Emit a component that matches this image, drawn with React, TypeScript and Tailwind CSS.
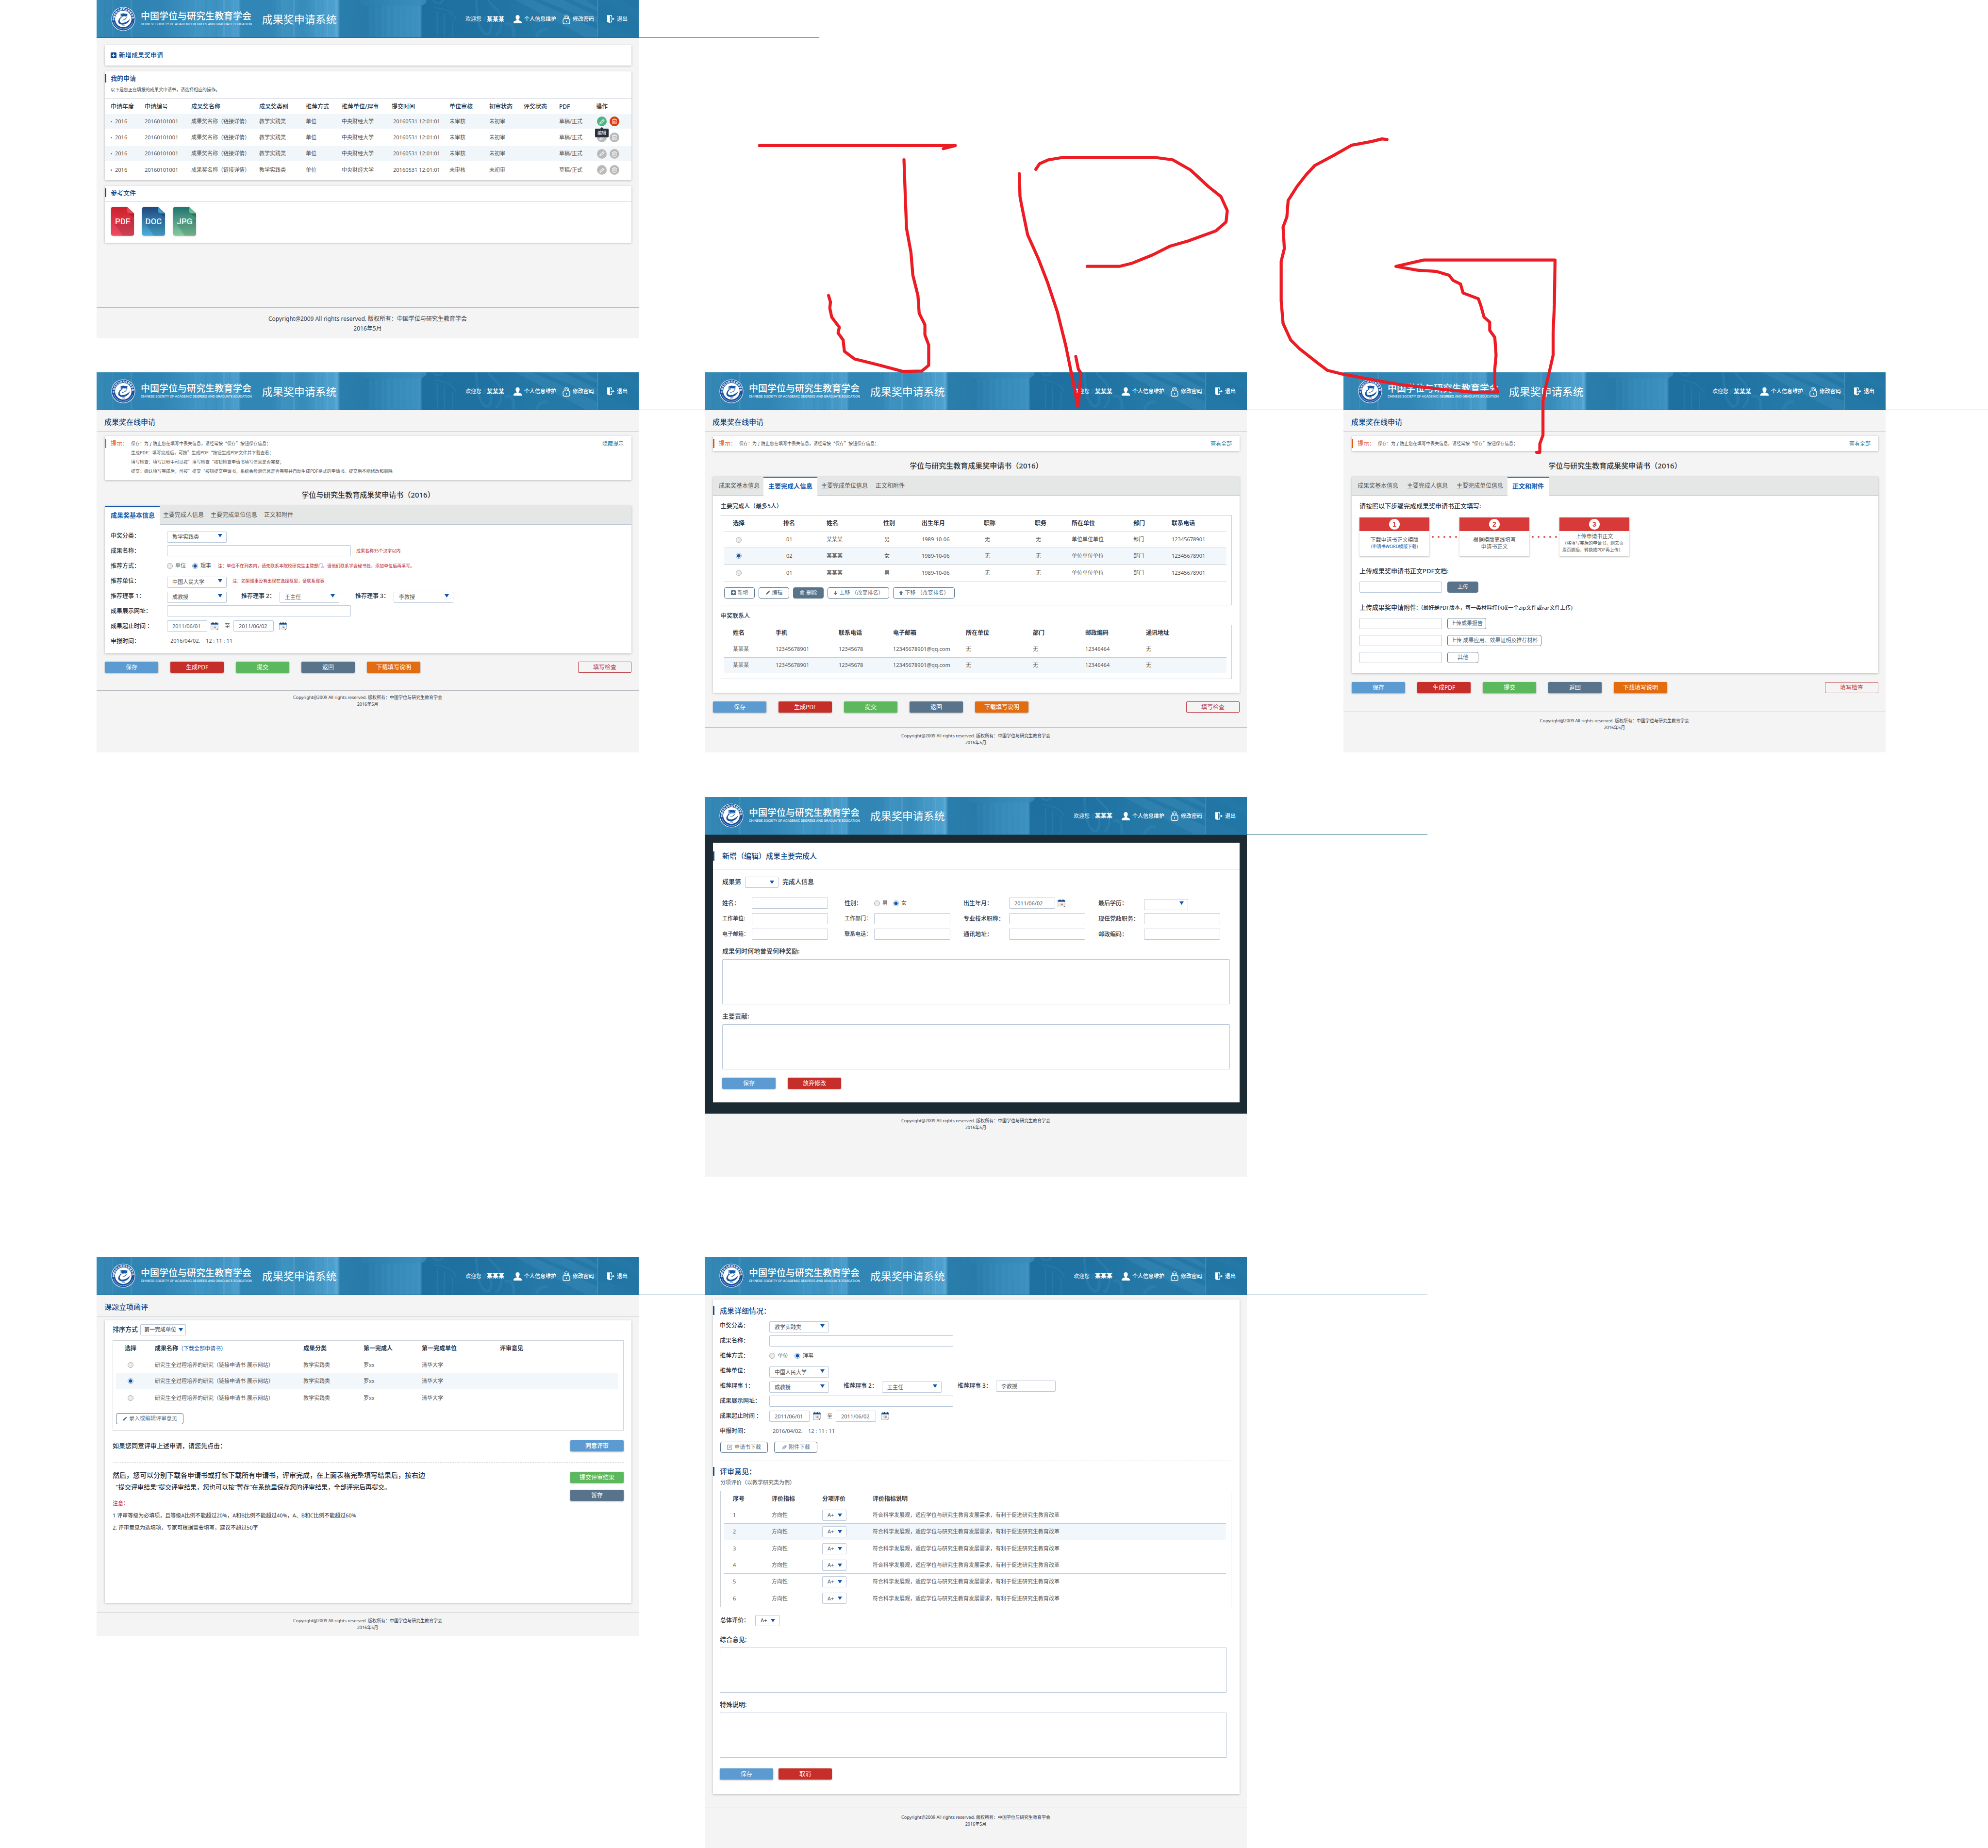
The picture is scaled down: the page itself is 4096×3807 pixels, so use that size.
import React, { useId } from "react";
import { clsx } from "clsx";

/* ---------- artwork ---------- */

function useSafeId() {
  return "u" + useId().replace(/[^a-zA-Z0-9]/g, "");
}

function BannerArt() {
  const id = useSafeId();
  const streaks = [20, 42, 66, 90, 240, 262, 288, 300, 318, 336, 352, 362, 470, 492, 505, 522, 560, 582, 598, 612, 624, 634];
  const flutes = [724, 740, 757, 772, 790, 806, 822, 838, 852];
  return (
    <svg className="absolute inset-0 h-full w-full" viewBox="0 0 1440 100" preserveAspectRatio="none" aria-hidden="true">
      <defs>
        <linearGradient id={id + "a"} x1="0" x2="1" y1="0" y2="0">
          <stop offset="0" stopColor="#3789b6" />
          <stop offset=".05" stopColor="#2f84b3" />
          <stop offset=".12" stopColor="#3085b4" />
          <stop offset=".19" stopColor="#3f95c4" />
          <stop offset=".22" stopColor="#3c91c0" />
          <stop offset=".262" stopColor="#4c9fcd" />
          <stop offset=".266" stopColor="#3086b5" />
          <stop offset=".32" stopColor="#3186b5" />
          <stop offset=".35" stopColor="#3e93c1" />
          <stop offset=".38" stopColor="#368bb9" />
          <stop offset=".42" stopColor="#4a9dcb" />
          <stop offset=".445" stopColor="#4fa2d0" />
          <stop offset=".449" stopColor="#2a7eac" />
          <stop offset=".5" stopColor="#287ba9" />
          <stop offset=".54" stopColor="#3388b7" />
          <stop offset=".597" stopColor="#3c91c0" />
          <stop offset=".601" stopColor="#1d70a0" />
          <stop offset=".7" stopColor="#1e71a1" />
          <stop offset=".82" stopColor="#2579a7" />
          <stop offset="1" stopColor="#2478a7" />
        </linearGradient>
        <linearGradient id={id + "b"} x1="0" x2="1" y1="0" y2="0">
          <stop offset="0" stopColor="#2a7eac" />
          <stop offset="1" stopColor="#3a8fbe" />
        </linearGradient>
      </defs>
      <rect width="1440" height="100" fill={`url(#${id}a)`} />
      {streaks.map((x, i) => (
        <rect key={x} x={x} y="0" width={i % 3 === 0 ? 5 : 2} height="100" fill={i % 2 ? "#ffffff" : "#1c6d9e"} opacity=".08" />
      ))}
      <path d="M700 0h176c2 7-6 12-12 15H708c-6-4-8-9-8-15z" fill={`url(#${id}b)`} opacity=".8" />
      {flutes.map((x) => (
        <rect key={x} x={x} y="17" width="7" height="83" rx="3" fill="#67b3dc" opacity=".08" />
      ))}
      <g fill="none" stroke="#4d9fcb" opacity=".18">
        <path d="M1008 0c4 30 0 70 24 90 12 6 20-12 14-34-4-16-18-14-16 2" strokeWidth="7" />
        <path d="M1040 0c10 18 30 22 34 50 4 24-4 38-14 44" strokeWidth="6" />
        <path d="M1084 66c14-8 26 0 24 34M1168 100c4-16 18-24 30-20" strokeWidth="8" />
        <path d="M896 20c30 4 50 10 60 34M905 30v70M924 36v64M946 52v48" strokeWidth="3" />
        <path d="M894 0c6 10 22 12 26 0" strokeWidth="5" />
      </g>
      <path d="M1112 0h46l172 78v22h-30zM1180 0h60l90 44v18zM1262 0h36l32 20v10z" fill="#5aa9d4" opacity=".18" />
      <rect x="1330" y="0" width="1" height="100" fill="#7fbcdb" opacity=".7" />
      <path d="M1340 0l100 52v48l-110-46zM1390 0l50 24V0z" fill="#1b6c9c" opacity=".2" />
    </svg>
  );
}

function Emblem() {
  const id = useSafeId();
  return (
    <svg className="size-[50px] shrink-0 overflow-visible" viewBox="0 0 66 66" aria-hidden="true">
      <defs>
        <path id={id + "t"} d="M9.400 37.500a24 24 0 1 1 47.200 0" />
      </defs>
      <circle cx="33" cy="33" r="32.500" fill="#e9f3fa" />
      <circle cx="33" cy="33" r="31" fill="#14509d" />
      <circle cx="33" cy="33" r="22.400" fill="#fff" />
      <text fill="#fff" fontSize="6.600" fontFamily="Noto Sans CJK SC, sans-serif" fontWeight="700">
        <textPath href={`#${id}t`}>中国学位与研究生教育学会</textPath>
      </text>
      <path d="M7.500 42a27 27 0 0 0 51 0" fill="none" stroke="#cfe0f3" strokeWidth="2.200" strokeDasharray="1.400 .7 .9 .6 1.100 .8" opacity=".75" />
      <path d="M23 19.500l10-1.800 13 1.800-2.200 1.400v6.200c-3.600-2.600-12-2.600-16.600 0v-6.200z" fill="#1556a5" />
      <path d="M24.200 21v8l-1.600 2.600 2.600.2V21z" fill="#1556a5" />
      <path
        d="M40.500 27.500c-6-2.500-14 1-16.600 7.600-2 5.600 2 9.400 8 8.600 8.400-1 15.600-6 19-11-1 9-10 15.600-19.600 15.800-9.400.2-14.400-5.400-11.200-12.600 3-7 12-11.600 19.200-9.400 3.400 1.100 3.600 4.600-.6 7.400-3 2-7 3.200-10.800 3.200 4.600-1.400 9.200-3.600 11.400-6.200 1.200-1.400 1.200-2.600.2-3.400z"
        fill="#1556a5"
      />
      <text x="33" y="53" textAnchor="middle" fill="#1556a5" fontSize="4.600" fontWeight="700" fontFamily="Liberation Serif, serif">
        1994
      </text>
    </svg>
  );
}

const UserIcon = () => (
  <svg className="h-[17px] w-[17px]" viewBox="0 0 22 22" fill="currentColor" aria-hidden="true">
    <path d="M11 0c3.600 0 5.400 2.400 5.400 5.600 0 2.700-1.200 5.400-2.900 6.700v1.700c2.700 1 7.500 2 8.500 5.200V22H0v-2.800C1 16 5.800 15 8.500 14v-1.700C6.800 11 5.600 8.300 5.600 5.600 5.600 2.400 7.400 0 11 0z" />
  </svg>
);
const LockIcon = () => (
  <svg className="h-[20px] w-[16px]" viewBox="0 0 20 26" fill="none" stroke="currentColor" strokeWidth="1.700" aria-hidden="true">
    <rect x="1" y="11" width="18" height="14" rx="4" />
    <path d="M4 11V7a6 6 0 0 1 12 0v4M7 11V7.500a3 3 0 0 1 6 0V11" strokeWidth="1.400" />
    <path d="M10 16.500v3.500" strokeWidth="2.600" />
  </svg>
);
const ExitIcon = () => (
  <svg className="h-[17px] w-[15px]" viewBox="0 0 20 22" aria-hidden="true">
    <path d="M0 0h13v6h-2V2H7.500v16H11v-4h2v6H8v2L0 18.500z" fill="currentColor" />
    <path d="M9.500 9.200h5.500V6.200l5 4-5 4v-3H9.500z" fill="currentColor" />
  </svg>
);
const PencilGlyph = ({ className }: { className: string }) => (
  <svg className={className} viewBox="0 0 24 24" fill="currentColor" aria-hidden="true">
    <path d="M3 21l1.500-6.500L15 4l5 5L9.500 19.500zM16.300 2.700l1.200-1.200c.8-.8 2-.8 2.800 0l2.200 2.200c.8.8.8 2 0 2.800l-1.200 1.200z" />
  </svg>
);
const TrashGlyph = ({ className }: { className: string }) => (
  <svg className={className} viewBox="0 0 24 24" fill="none" stroke="currentColor" strokeWidth="2" aria-hidden="true">
    <path d="M2 5.500h20M8 5V2h8v3M4.500 6v16h15V6M9 9.500v9M12 9.500v9M15 9.500v9" />
  </svg>
);
const PencilOutline = () => (
  <svg className="size-[13px]" viewBox="0 0 24 24" fill="none" stroke="currentColor" strokeWidth="1.800" aria-hidden="true">
    <path d="M3 21l1.500-6L16 3.500l4.500 4.500L9 19.500zM14 5.500l4.500 4.500M5 15l4 4M6.500 14.500L16 5.500M9 18l10-9" />
  </svg>
);
const PlusBox = ({ className }: { className: string }) => (
  <svg className={className} viewBox="0 0 16 16" aria-hidden="true">
    <rect width="16" height="16" rx="2.500" fill="currentColor" />
    <path d="M8 3.200v9.600M3.200 8h9.600" stroke="#fff" strokeWidth="2.200" />
  </svg>
);
const ArrowGlyph = ({ up }: { up?: boolean }) => (
  <svg className={clsx("size-[9px]", up && "rotate-180")} viewBox="0 0 12 12" fill="currentColor" aria-hidden="true">
    <path d="M4 0h4v5.500h4L6 12 0 5.500h4z" />
  </svg>
);
const CalendarIcon = () => (
  <svg className="h-[16px] w-[16px]" viewBox="0 0 20 20" aria-hidden="true">
    <path d="M1 3h18v14l-3 3H1z" fill="#fbfbfb" stroke="#8b8f96" strokeWidth="1" />
    <rect x=".5" y="1.500" width="19" height="4.500" rx=".8" fill="#1f62ad" />
    <path d="M4 0v4M8 0v4M12 0v4M16 0v4" stroke="#0d2c55" strokeWidth="1.400" />
    <path d="M5 9h10M5 12h10M5 15h10M5 9v8M8 9v8M11 9v8M14 9v8" stroke="#c3c6cc" strokeWidth=".8" />
    <rect x="9.500" y="11" width="4" height="3.600" fill="#e0674b" />
    <path d="M16 20v-3h3z" fill="#26313c" />
  </svg>
);

function FileIcon({ label, top, bottom, fold }: { label: string; top: string; bottom: string; fold: string }) {
  const id = useSafeId();
  return (
    <a href="#" aria-label={label} className="block drop-shadow-sm">
      <svg className="h-[60px] w-[47px]" viewBox="0 0 61 77">
        <defs>
          <linearGradient id={id} x1="0" x2="0" y1="0" y2="1">
            <stop offset="0" stopColor={top} />
            <stop offset="1" stopColor={bottom} />
          </linearGradient>
        </defs>
        <path d="M5 0h38l18 17v55a5 5 0 0 1-5 5H5a5 5 0 0 1-5-5V5a5 5 0 0 1 5-5z" fill={`url(#${id})`} />
        <path d="M9 45l22 32h25a5 5 0 0 0 5-5V36l-8-7-1 16z" fill="#000" opacity=".13" />
        <path d="M46 17h15v13z" fill="#000" opacity=".18" />
        <path d="M43 0l18 17H48a5 5 0 0 1-5-5z" fill={fold} />
        <text x="30.500" y="46" textAnchor="middle" fontSize="22" fontWeight="500" fontFamily="Roboto, sans-serif" fill="#fff" fillOpacity=".92">
          {label}
        </text>
      </svg>
    </a>
  );
}

function RedMarks() {
  return (
    <svg
      className="pointer-events-none absolute inset-0 z-10 h-full w-full"
      viewBox="0 0 1568 1457.500"
      preserveAspectRatio="none"
      fill="none"
      stroke="#ed1c24"
      strokeWidth="2.400"
      strokeLinecap="round"
      strokeLinejoin="round"
      aria-hidden="true"
    >
      <path d="M599 114.800H753.500L744 117.200" />
      <path d="M713 126L714 154 715 180 718.500 199 720 217 724 233 725 247 729.500 256V264L732.500 272V288L727 292.500 712 292.800 694 288 674 283 666 277 665 268 661 262.500 662 258 656 250 654.500 243 655 238 653.500 233" />
      <path d="M804 137L804.500 155 806 163 810.500 185 819 204 826 222 834 246 840.500 272 846 299 850 320M848.500 281L850.500 291 852.500 294 850.500 320" />
      <path d="M817 133.500L820 129 827 126 839 124H910L925 126 939 134 953 147 963 155 968 166 967 175 959 182 937 190 923 194 909 201 893 207.500 883 210H857.500" />
      <path d="M1094 110L1090 109.500 1082 111.500 1066 114.500 1052 122.500 1037 130.500 1030 138 1023 147 1016 158 1015 171 1012 179 1013 196 1010.500 206V237L1012 255 1018 268 1025 275 1039 286 1047 292 1057.500 294.600 1082 299.300 1104 303.200 1138 307 1161 309.200 1181.500 309 1179 304.500V291L1180 280 1179 266 1175 260.500V254L1170.500 250 1168 241 1166 235.500 1154 231 1152 224 1146 221 1143 217 1133 214 1118 213 1101 210 1123 205H1226.500L1226 240 1225 262V280L1222.500 291 1219 305.600 1217 316.500V343L1214.500 350V356.600H1212" />
    </svg>
  );
}

/* ---------- controls ---------- */

const boxBorder = "rounded-[2px] border border-[#b9c7da] bg-white text-[11px] text-[#555]";

function TextBox({ className, id, value, label }: { className?: string; id?: string; value?: string; label?: string }) {
  return <input id={id} type="text" aria-label={label} defaultValue={value} className={clsx("block h-[23px] px-[10px]", boxBorder, className)} />;
}

function Dropdown({ className, id, value, label, tight }: { className?: string; id?: string; value: string; label?: string; tight?: boolean }) {
  return (
    <span className={clsx("relative block h-[23px]", className)}>
      <select id={id} aria-label={label} defaultValue={value} className={clsx("h-full w-full appearance-none", tight ? "pl-[7px]" : "pl-[10px]", boxBorder)}>
        <option value={value}>{value}</option>
      </select>
      <svg className={clsx("pointer-events-none absolute top-[8px] h-[7px] w-[9px]", tight ? "right-[6px]" : "right-[9px]")} viewBox="0 0 9 7" aria-hidden="true">
        <path d="M0 0h9L4.500 7z" fill="#0f56ab" />
      </svg>
    </span>
  );
}

function Radio({ name, checked, label, id }: { name: string; checked?: boolean; label?: string; id?: string }) {
  return (
    <input
      id={id}
      type="radio"
      name={name}
      aria-label={label}
      defaultChecked={checked}
      className="block size-[12px] shrink-0 appearance-none rounded-full border border-[#a9a9a9] bg-[#ebebeb] checked:border-[#8fa8c6] checked:bg-[radial-gradient(circle,#0f56ab_0,#0f56ab_3px,#eef3f9_4px)]"
    />
  );
}

function RadioOption({ name, text, checked }: { name: string; text: string; checked?: boolean }) {
  return (
    <label className="flex items-center gap-[5px] text-[11px] text-[#555]">
      <Radio name={name} checked={checked} />
      {text}
    </label>
  );
}

const tones = {
  blue: "bg-[#5c9bd1] text-white",
  red: "bg-[#c62e2a] text-white",
  green: "bg-[#5cb85c] text-white",
  slate: "bg-[#58738a] text-white",
  orange: "bg-[#e46c10] text-white",
};

function SolidButton({ tone, children }: { tone: keyof typeof tones; children: React.ReactNode }) {
  return (
    <button type="button" className={clsx("h-[23px] w-[110px] rounded-[2px] text-[12px] leading-[23px] shadow-[0_1px_3px_rgba(0,0,0,0.35)]", tones[tone])}>
      {children}
    </button>
  );
}

function OutlineButton({ className, children, filled }: { className?: string; children: React.ReactNode; filled?: boolean }) {
  return (
    <button
      type="button"
      className={clsx(
        "flex h-[23px] items-center justify-center gap-[4px] rounded-[4px] border border-[#58738a] text-[11px] whitespace-pre",
        filled ? "bg-[#58738a] text-white" : "bg-white text-[#58738a]",
        className,
      )}
    >
      {children}
    </button>
  );
}

/* ---------- page frame ---------- */

function SiteHeader() {
  return (
    <header className="relative h-[78px] border-b border-[#22688f] text-white">
      <BannerArt />
      <div className="relative flex h-full items-center">
        <div className="ml-[30px]">
          <Emblem />
        </div>
        <div className="ml-[11px] pb-[2px]">
          <div className="text-[19px] leading-[24px] font-medium whitespace-nowrap">中国学位与研究生教育学会</div>
          <div className="font-['Roboto',sans-serif] text-[7px] leading-[10px] whitespace-nowrap">CHINESE SOCIETY OF ACADEMIC DEGREES AND GRADUATE EDUCATION</div>
        </div>
        <h1 className="ml-[21px] text-[22px] leading-[28px] whitespace-nowrap">成果奖申请系统</h1>
        <nav className="ml-auto flex items-center pt-[2px] text-[11px] whitespace-nowrap">
          <span>欢迎您</span>
          <span className="ml-[11px] text-[12px] font-bold">某某某</span>
          <a href="#" className="ml-[19px] flex items-center gap-[5px] font-medium">
            <UserIcon />
            个人信息维护
          </a>
          <a href="#" className="ml-[13px] flex items-center gap-[5px] font-medium">
            <LockIcon />
            修改密码
          </a>
          <a href="#" className="mr-[23px] ml-[27px] flex items-center gap-[5px] font-medium">
            <ExitIcon />
            退出
          </a>
        </nav>
      </div>
    </header>
  );
}

function SiteFooter({ className, size = "text-[9px] leading-[14px]" }: { className?: string; size?: string }) {
  return (
    <footer className={clsx("border-t border-[#b9bdc1] text-center text-[#333b4a]", size, className)}>
      <p>Copyright@2009 All rights reserved. 版权所有：中国学位与研究生教育学会</p>
      <p>2016年5月</p>
    </footer>
  );
}

function Board({ className, children }: { className?: string; children: React.ReactNode }) {
  return (
    <article className={clsx("row-start-1 bg-[#f4f4f4]", className)}>
      <SiteHeader />
      {children}
    </article>
  );
}

const card = "bg-white shadow-[0_1px_4px_rgba(0,0,0,0.25)]";

function SectionTitle({ children, className }: { children: React.ReactNode; className?: string }) {
  return <h2 className={clsx("border-l-[3px] border-[#04509a] font-medium text-[#0d4a8c]", className)}>{children}</h2>;
}

function PageTitle({ children }: { children: React.ReactNode }) {
  return <h2 className="h-[44px] border-b border-[#c3cad0] pt-[13px] pl-[16px] text-[15px] leading-[22px] font-medium text-[#164a85]">{children}</h2>;
}

const tips = [
  "保存：为了防止您在填写中丢失信息，请经常按“保存”按钮保存信息；",
  "生成PDF：填写完成后，可按”生成PDF“按钮生成PDF文件并下载查看；",
  "填写检查：填写过程中可以按”填写检查“按钮检查申请书填写信息是否完整；",
  "提交：确认填写完成后，可按”提交“按钮提交申请书，系统会检测信息是否完整并自动生成PDF格式的申请书。提交后不能修改和删除",
];
const tabNames = ["成果奖基本信息", "主要完成人信息", "主要完成单位信息", "正文和附件"];

function ApplicationBoard({
  className,
  active,
  expanded,
  tabPad,
  actionPad,
  footerPad,
  children,
}: {
  className: string;
  active: number;
  expanded?: boolean;
  tabPad: string;
  actionPad: string;
  footerPad: string;
  children: React.ReactNode;
}) {
  return (
    <Board className={className}>
      <main>
        <PageTitle>成果奖在线申请</PageTitle>
        <div className="mr-[15px] ml-[17px]">
          <div className={clsx("mt-[9px] flex pt-[6px]", card, expanded ? "pb-[9px]" : "pb-[6px]")}>
            <strong className="h-[19px] w-[54px] border-l-[3px] border-[#e9540d] pl-[9px] text-[12px] leading-[19px] font-normal text-[#e9622a]">提示：</strong>
            <ul className="flex-1 font-['Noto_Sans_CJK_SC',sans-serif] text-[9px] leading-[19px] text-[#555]">
              {tips.slice(0, expanded ? 4 : 1).map((t) => (
                <li key={t}>{t}</li>
              ))}
            </ul>
            <a href="#" className="mr-[16px] text-[11px] leading-[19px] text-[#2b7fa6]">
              {expanded ? "隐藏提示" : "查看全部"}
            </a>
          </div>
          <h3 className="mt-[20px] mb-[13px] text-center text-[15px] leading-[20px] font-medium text-[#333]">学位与研究生教育成果奖申请书（2016）</h3>
          <section className={card}>
            <div role="tablist" className="flex h-[39px] bg-[#e5e7e6]">
              {tabNames.map((t, i) => (
                <button
                  key={t}
                  type="button"
                  role="tab"
                  aria-selected={i === active}
                  className={clsx(
                    "whitespace-nowrap",
                    i === active
                      ? "border-t-2 border-[#1559a8] bg-white pb-[2px] text-[13px] font-bold text-[#1459ab]"
                      : "border-b border-[#bcc8d6] text-[12px] text-[#555]",
                    i === 0 ? "pl-[12px]" : i === active ? "pl-[10px]" : "",
                    i === active && "pr-[10px]",
                    i !== active && tabPad,
                  )}
                >
                  {t}
                </button>
              ))}
              <span className="flex-1 border-b border-[#bcc8d6]" />
            </div>
            {children}
          </section>
          <div className={clsx("flex gap-[25px]", actionPad)}>
            <SolidButton tone="blue">保存</SolidButton>
            <SolidButton tone="red">生成PDF</SolidButton>
            <SolidButton tone="green">提交</SolidButton>
            <SolidButton tone="slate">返回</SolidButton>
            <SolidButton tone="orange">下载填写说明</SolidButton>
            <button type="button" className="ml-auto h-[23px] w-[110px] rounded-[2px] border border-[#b93a42] text-[12px] leading-[21px] text-[#b93a42]">
              填写检查
            </button>
          </div>
        </div>
      </main>
      <SiteFooter className={footerPad} />
    </Board>
  );
}

/* ---------- award details form ---------- */

function FormRow({ label, htmlFor, labelWidth, children }: { label: string; htmlFor?: string; labelWidth: string; children: React.ReactNode }) {
  return (
    <div className="flex h-[31px] items-center">
      <label htmlFor={htmlFor} className={clsx("shrink-0 text-[12px] font-medium whitespace-pre text-[#2f3543]", labelWidth)}>
        {label}
      </label>
      {children}
    </div>
  );
}

function AwardForm({ labelWidth, notes }: { labelWidth: string; notes?: boolean }) {
  const id = useSafeId();
  const side = "shrink-0 w-[79px] text-[12px] font-medium text-[#2f3543]";
  const note = "text-[9px] text-[#b8181e]";
  return (
    <form>
      <FormRow label="申奖分类：" htmlFor={id + "1"} labelWidth={labelWidth}>
        <Dropdown id={id + "1"} className="w-[123px]" value="教学实践类" />
      </FormRow>
      <FormRow label="成果名称：" htmlFor={id + "2"} labelWidth={labelWidth}>
        <TextBox id={id + "2"} className="w-[379px]" />
        {notes && <span className={clsx("ml-[11px]", note)}>成果名称35个汉字以内</span>}
      </FormRow>
      <FormRow label="推荐方式：" labelWidth={labelWidth}>
        <div className="flex gap-[13px]">
          <RadioOption name={id + "way"} text="单位" />
          <RadioOption name={id + "way"} text="理事" checked />
        </div>
        {notes && <span className={clsx("ml-[14px]", note)}>注：单位不在列表内，请先联系本院校研究生主管部门，请他们联系学会秘书处，添加单位后再填写。</span>}
      </FormRow>
      <FormRow label="推荐单位：" htmlFor={id + "3"} labelWidth={labelWidth}>
        <Dropdown id={id + "3"} className="w-[123px]" value="中国人民大学" />
        {notes && <span className={clsx("ml-[12px]", note)}>注：如果理事没有出现在选择框里，请联系理事</span>}
      </FormRow>
      <FormRow label="推荐理事 1：" htmlFor={id + "4"} labelWidth={labelWidth}>
        <Dropdown id={id + "4"} className="w-[123px]" value="成教授" />
        <label htmlFor={id + "5"} className={clsx("ml-[30px]", side)}>
          推荐理事 2：
        </label>
        <Dropdown id={id + "5"} className="w-[123px]" value="王主任" />
        <label htmlFor={id + "6"} className={clsx("ml-[33px]", side)}>
          推荐理事 3：
        </label>
        {notes ? <Dropdown id={id + "6"} className="w-[123px]" value="李教授" /> : <TextBox id={id + "6"} className="w-[123px]" value="李教授" />}
      </FormRow>
      <FormRow label="成果展示网址：" htmlFor={id + "7"} labelWidth={labelWidth}>
        <TextBox id={id + "7"} className="w-[379px]" />
      </FormRow>
      <FormRow label="成果起止时间 ：" htmlFor={id + "8"} labelWidth={labelWidth}>
        <TextBox id={id + "8"} className="w-[83px]" value="2011/06/01" />
        <button type="button" aria-label="选择开始日期" className="ml-[7px]">
          <CalendarIcon />
        </button>
        <span className="ml-[13px] w-[18px] text-[11px] text-[#555]">至</span>
        <TextBox className="w-[83px]" value="2011/06/02" label="结束日期" />
        <button type="button" aria-label="选择结束日期" className="ml-[11px]">
          <CalendarIcon />
        </button>
      </FormRow>
      <FormRow label="申报时间：" labelWidth={labelWidth}>
        <output className="ml-[7px] text-[11px] whitespace-pre text-[#555]">{"2016/04/02.    12 : 11 : 11"}</output>
      </FormRow>
    </form>
  );
}

/* ---------- tables ---------- */

type Cell = React.ReactNode;

function DataTable({
  cols,
  head,
  rows,
  headHeight,
  rowHeights,
  highlight,
  openEnd,
}: {
  cols: string[];
  head: Cell[];
  rows: Cell[][];
  headHeight: string;
  rowHeights: string[];
  highlight: number;
  openEnd?: boolean;
}) {
  return (
    <table className="w-full table-fixed text-left text-[11px] text-[#555]">
      <colgroup>
        {cols.map((c, i) => (
          <col key={i} className={c} />
        ))}
      </colgroup>
      <thead>
        <tr className={clsx("border-b border-[#c9ced3] text-[12px] text-[#2f3543]", headHeight)}>
          {head.map((h, i) => (
            <th key={i} scope="col" className={clsx("p-0 font-bold whitespace-nowrap", i === 0 && "pl-[18px]")}>
              {h}
            </th>
          ))}
        </tr>
      </thead>
      <tbody>
        {rows.map((r, i) => (
          <tr key={i} className={clsx(rowHeights[i], i === highlight && "bg-[#f2f7fc]", !(openEnd && i === rows.length - 1) && "border-b border-[#c9ced3]")}>
            {r.map((c, j) => (
              <td key={j} className={clsx("p-0 whitespace-nowrap", j === 0 && "pl-[18px]")}>
                {c}
              </td>
            ))}
          </tr>
        ))}
      </tbody>
    </table>
  );
}

/* ---------- boards ---------- */

function ActionIcons({ live, tip }: { live?: boolean; tip?: boolean }) {
  return (
    <div className="flex gap-[6px] pl-[2px] text-white">
      <span className="relative block size-[20px]">
        <button type="button" aria-label="编辑" className={clsx("grid size-[20px] place-items-center rounded-full", live ? "bg-[#4cb585]" : "bg-[#b9b9b9]")}>
          <PencilOutline />
        </button>
        {tip && (
          <span role="tooltip" className="absolute top-[25px] left-[-4px] z-[1] h-[18px] w-[28px] rounded-[2px] bg-[#27313b] text-center text-[9px] leading-[18px]">
            <span className="absolute top-[-2px] left-[11px] size-[6px] rotate-45 bg-[#27313b]" />
            编辑
          </span>
        )}
      </span>
      <button type="button" aria-label="删除" className={clsx("grid size-[20px] place-items-center rounded-full", live ? "bg-[#dc3a0c]" : "bg-[#b9b9b9]")}>
        <TrashGlyph className="size-[12px]" />
      </button>
    </div>
  );
}

function MyApplications() {
  const head = ["申请年度", "申请编号", "成果奖名称", "成果奖类别", "推荐方式", "推荐单位/理事", "提交时间", "单位审核", "初审状态", "评奖状态", "PDF", "操作"];
  const cols = ["w-[82px]", "w-[96px]", "w-[140px]", "w-[96px]", "w-[74px]", "w-[103px]", "w-[119px]", "w-[82px]", "w-[71px]", "w-[73px]", "w-[76px]", ""];
  const heights = ["h-[30px] bg-[#f1f6fb]", "h-[36px]", "h-[31px] bg-[#f1f6fb]", "h-[36px]"];
  return (
    <Board className="col-start-2">
      <main className="mr-[15px] ml-[17px] pt-[15px] pb-[133px]">
        <a href="#" className={clsx("flex h-[42px] items-center gap-[5px] pl-[12px] text-[13px] font-medium text-[#0d4a8c]", card)}>
          <PlusBox className="size-[12px]" />
          新增成果奖申请
        </a>
        <section className={clsx("mt-[12px] pt-[5px] pb-[3px]", card)}>
          <SectionTitle className="pl-[9px] text-[13px] leading-[18px]">我的申请</SectionTitle>
          <p className="mt-[6px] border-b border-[#bcc4d4] pb-[9px] pl-[12px] text-[9px] leading-[18px] text-[#555]">以下是您正在填报的成果奖申请书，请选择相应的操作。</p>
          <table className="w-full table-fixed text-left text-[11px] text-[#555]">
            <colgroup>
              {cols.map((c, i) => (
                <col key={i} className={c} />
              ))}
            </colgroup>
            <thead>
              <tr className="h-[31px] text-[12px] text-[#2f3543]">
                {head.map((h, i) => (
                  <th key={h} scope="col" className={clsx("p-0 font-medium whitespace-nowrap", i === 0 && "pl-[12px]")}>
                    {h}
                  </th>
                ))}
              </tr>
            </thead>
            <tbody>
              {heights.map((h, i) => (
                <tr key={i} className={clsx("*:p-0 *:whitespace-nowrap", h)}>
                  <td>
                    <span className="ml-[12px] flex items-center gap-[6px]">
                      <i className="size-[3px] rounded-full bg-[#2f8fae]" />
                      2016
                    </span>
                  </td>
                  <td>20160101001</td>
                  <td>
                    <a href="#">成果奖名称（链接详情）</a>
                  </td>
                  <td>教学实践类</td>
                  <td>单位</td>
                  <td>中央财经大学</td>
                  <td>
                    <span className="ml-[3px]">20160531 12:01:01</span>
                  </td>
                  <td>未审核</td>
                  <td>未初审</td>
                  <td />
                  <td>草稿/正式</td>
                  <td>
                    <ActionIcons live={i === 0} tip={i === 0} />
                  </td>
                </tr>
              ))}
            </tbody>
          </table>
        </section>
        <section className={clsx("mt-[12px] pt-[5px]", card)}>
          <SectionTitle className="pl-[9px] text-[13px] leading-[18px]">参考文件</SectionTitle>
          <div className="mt-[8px] flex gap-[17px] border-t border-[#bcc4d4] pt-[11px] pb-[14px] pl-[13px]">
            <FileIcon label="PDF" top="#cd1f2b" bottom="#ef4a63" fold="#e34b58" />
            <FileIcon label="DOC" top="#1f467c" bottom="#4ab0dc" fold="#3f9bc9" />
            <FileIcon label="JPG" top="#22736f" bottom="#82cb9f" fold="#6dbb94" />
          </div>
        </section>
      </main>
      <SiteFooter className="pt-[13px] pb-[10px]" size="text-[12px] leading-[20px]" />
    </Board>
  );
}

const subHead = "text-[12px] leading-[18px] font-medium text-[#2f3543]";

function PeopleBoard() {
  const off = (t: string, c: string) => <span className={c}>{t}</span>;
  const person = (rank: string, sex: string, checked?: boolean): Cell[] => [
    <span className="ml-[6px] block">
      <Radio name="person" checked={checked} label={"选择 " + rank} />
    </span>,
    off(rank, "ml-[6px]"),
    "某某某",
    off(sex, "ml-[2px]"),
    "1989-10-06",
    off("无", "ml-[2px]"),
    off("无", "ml-[2px]"),
    "单位单位单位",
    "部门",
    "12345678901",
  ];
  const contact: Cell[] = ["某某某", "12345678901", "12345678", "12345678901@qq.com", "无", "无", "12346464", "无"];
  return (
    <ApplicationBoard className="col-start-4" active={1} tabPad="pr-[8px] not-first:pl-[8px]" actionPad="mt-[18px] mb-[30px]" footerPad="pt-[10px] pb-[13px]">
      <div className="pt-[13px] pr-[16px] pb-[28px] pl-[16px]">
        <h4 className={subHead}>主要完成人（最多5人）</h4>
        <div className="mt-[9px] border border-[#ccd2d8] pr-[10px] pb-[13px] pl-[6px]">
          <DataTable
            cols={["w-[122px]", "w-[89px]", "w-[117px]", "w-[79px]", "w-[128px]", "w-[105px]", "w-[76px]", "w-[127px]", "w-[79px]", ""]}
            head={["选择", "排名", "姓名", "性别", "出生年月", "职称", "职务", "所在单位", "部门", "联系电话"]}
            rows={[person("01", "男"), person("02", "女", true), person("01", "男")]}
            headHeight="h-[33px]"
            rowHeights={["h-[33px]", "h-[34px]", "h-[36px]"]}
            highlight={1}
          />
          <div className="mt-[11px] flex gap-[8px]">
            <OutlineButton className="w-[63px]">
              <PlusBox className="size-[10px]" />
              新增
            </OutlineButton>
            <OutlineButton className="w-[63px]">
              <PencilGlyph className="size-[10px]" />
              编辑
            </OutlineButton>
            <OutlineButton className="w-[63px]" filled>
              <TrashGlyph className="size-[10px]" />
              删除
            </OutlineButton>
            <OutlineButton className="w-[127px]">
              <ArrowGlyph />
              {"上移 （改变排名）"}
            </OutlineButton>
            <OutlineButton className="w-[127px]">
              <ArrowGlyph up />
              {"下移 （改变排名）"}
            </OutlineButton>
          </div>
        </div>
        <h4 className={clsx("mt-[13px]", subHead)}>申奖联系人</h4>
        <div className="mt-[9px] border border-[#ccd2d8] pr-[10px] pb-[12px] pl-[6px]">
          <DataTable
            cols={["w-[106px]", "w-[130px]", "w-[112px]", "w-[150px]", "w-[138px]", "w-[108px]", "w-[125px]", ""]}
            head={["姓名", "手机", "联系电话", "电子邮箱", "所在单位", "部门", "邮政编码", "通讯地址"]}
            rows={[contact, contact]}
            headHeight="h-[33px]"
            rowHeights={["h-[34px]", "h-[31px]"]}
            highlight={1}
            openEnd
          />
        </div>
      </div>
    </ApplicationBoard>
  );
}

function StepCard({ n, children }: { n: number; children: React.ReactNode }) {
  return (
    <li className="h-[80px] w-[144px] bg-white shadow-[0_1px_3px_rgba(0,0,0,0.3)]">
      <div className="grid h-[28px] place-items-center bg-[#d73a38]">
        <span className="grid size-[22px] place-items-center rounded-full bg-white font-['Liberation_Sans',sans-serif] text-[14px] leading-none font-bold text-[#d73a38]">{n}</span>
      </div>
      {children}
    </li>
  );
}

function StepDots() {
  return (
    <li aria-hidden="true" className="flex w-[62px] justify-center gap-[8px]">
      {[0, 1, 2, 3, 4].map((i) => (
        <i key={i} className="size-[4px] rounded-full bg-[#d9534f]" />
      ))}
    </li>
  );
}

function UploadBoard() {
  const upHead = "text-[13px] leading-[18px] font-medium text-[#2f3543]";
  const uploads = [
    { text: "上传成果报告", width: "w-[80px]" },
    { text: "上传 成果应用、效果证明及推荐材料", width: "w-[194px]" },
    { text: "其他", width: "w-[64px]" },
  ];
  return (
    <ApplicationBoard className="col-start-6" active={3} tabPad="pr-[9px] not-first:pl-[9px]" actionPad="mt-[18px] mb-[38px]" footerPad="pt-[11px]">
      <div className="px-[16px] pt-[12px] pb-[21px]">
        <h4 className={upHead}>请按照以下步骤完成成果奖申请书正文填写:</h4>
        <ol className="mt-[15px] flex items-center text-center text-[11px] leading-[14px] text-[#555]">
          <StepCard n={1}>
            <p className="pt-[11px]">下载申请书正文模版</p>
            <p className="text-[9px]">
              （
              <a href="#" className="text-[#0f56ab]">
                申请书WORD模版下载
              </a>
              ）
            </p>
          </StepCard>
          <StepDots />
          <StepCard n={2}>
            <p className="pt-[11px]">根据模版离线填写</p>
            <p>申请书正文</p>
          </StepCard>
          <StepDots />
          <StepCard n={3}>
            <p className="pt-[4px]">上传申请书正文</p>
            <p className="px-[6px] text-left text-[9px]">（将填写完后的申请书，删去页眉页脚后，转换成PDF再上传）</p>
          </StepCard>
        </ol>
        <h4 className={clsx("mt-[21px]", upHead)}>上传成果奖申请书正文PDF文档:</h4>
        <div className="mt-[13px] flex gap-[11px]">
          <TextBox className="w-[170px]" label="申请书正文PDF文档" />
          <OutlineButton className="w-[64px]" filled>
            上传
          </OutlineButton>
        </div>
        <h4 className={clsx("mt-[21px]", upHead)}>
          上传成果奖申请附件:<span className="text-[11px]">（最好是PDF版本，每一类材料打包成一个zip文件或rar文件上传)</span>
        </h4>
        {uploads.map((u) => (
          <div key={u.text} className="mt-[12px] flex gap-[11px]">
            <TextBox className="w-[170px]" label={u.text} />
            <OutlineButton className={u.width}>{u.text}</OutlineButton>
          </div>
        ))}
      </div>
    </ApplicationBoard>
  );
}

function Field({ label, htmlFor, wide, small, children }: { label: string; htmlFor?: string; wide?: boolean; small?: boolean; children: React.ReactNode }) {
  return (
    <div className="flex h-[32px] items-center">
      <label htmlFor={htmlFor} className={clsx("shrink-0 font-medium whitespace-nowrap text-[#2f3543]", wide ? "w-[94px]" : "w-[61px]", small ? "text-[11px]" : "text-[12px]")}>
        {label}
      </label>
      {children}
    </div>
  );
}

function PersonDialogBoard() {
  const id = useSafeId();
  const box = (n: string) => <TextBox id={id + n} className="w-[157px]" />;
  const big = "block text-[13px] leading-[18px] font-medium text-[#2b2f38]";
  const area = "mt-[8px] block h-[93px] w-full resize-none rounded-[2px] border border-[#b9c7da] bg-white";
  return (
    <Board className="col-start-4">
      <main className="bg-[#1b2a33] pt-[16px] pr-[15px] pb-[23px] pl-[17px]">
        <section className="bg-white pt-[18px]">
          <SectionTitle className="pl-[16px] text-[15px] leading-[19px]">新增（编辑）成果主要完成人</SectionTitle>
          <form className="mt-[17px] border-t border-[#b9c7d0] pt-[15px] pr-[20px] pb-[28px] pl-[19px]">
            <div className="flex items-center text-[13px] font-medium text-[#2b2f38]">
              <label htmlFor={id + "n"}>成果第</label>
              <Dropdown id={id + "n"} className="mx-[8px] w-[69px]" value="" />
              完成人信息
            </div>
            <div className="mt-[16px] grid grid-cols-[252px_245px_278px_1fr]">
              <Field label="姓名：" htmlFor={id + "a"}>
                {box("a")}
              </Field>
              <Field label="性别：">
                <div className="flex gap-[11px]">
                  <RadioOption name={id + "sex"} text="男" />
                  <RadioOption name={id + "sex"} text="女" checked />
                </div>
              </Field>
              <Field label="出生年月：" htmlFor={id + "b"} wide>
                <TextBox id={id + "b"} className="w-[95px]" value="2011/06/02" />
                <button type="button" aria-label="选择出生年月" className="ml-[5px]">
                  <CalendarIcon />
                </button>
              </Field>
              <Field label="最后学历：" htmlFor={id + "c"} wide>
                <Dropdown id={id + "c"} className="w-[91px]" value="" />
              </Field>
              <Field label="工作单位:" htmlFor={id + "d"} small>
                {box("d")}
              </Field>
              <Field label="工作部门：" htmlFor={id + "e"} small>
                {box("e")}
              </Field>
              <Field label="专业技术职称：" htmlFor={id + "f"} wide>
                {box("f")}
              </Field>
              <Field label="现任党政职务：" htmlFor={id + "g"} wide>
                {box("g")}
              </Field>
              <Field label="电子邮箱：" htmlFor={id + "h"} small>
                {box("h")}
              </Field>
              <Field label="联系电话：" htmlFor={id + "i"} small>
                {box("i")}
              </Field>
              <Field label="通讯地址：" htmlFor={id + "j"} wide>
                {box("j")}
              </Field>
              <Field label="邮政编码：" htmlFor={id + "k"} wide>
                {box("k")}
              </Field>
            </div>
            <label htmlFor={id + "l"} className={clsx("mt-[9px]", big)}>
              成果何时何地曾受何种奖励:
            </label>
            <textarea id={id + "l"} className={area} />
            <label htmlFor={id + "m"} className={clsx("mt-[15px]", big)}>
              主要贡献:
            </label>
            <textarea id={id + "m"} className={area} />
            <div className="mt-[17px] flex gap-[25px]">
              <SolidButton tone="blue">保存</SolidButton>
              <SolidButton tone="red">放弃修改</SolidButton>
            </div>
          </form>
        </section>
      </main>
      <SiteFooter className="pt-[7px] pb-[94px]" />
    </Board>
  );
}

function ReviewListBoard() {
  const row = (i: number): Cell[] => [
    <span className="ml-[6px] block">
      <Radio name="review" checked={i === 1} label={"选择第" + (i + 1) + "项"} />
    </span>,
    <a href="#">研究生全过程培养的研究（链接申请书 展示网站）</a>,
    "教学实践类",
    "罗xx",
    "清华大学",
    "",
  ];
  return (
    <Board className="col-start-2 self-start">
      <main className="pb-[20px]">
        <PageTitle>课题立项函评</PageTitle>
        <section className={clsx("mt-[8px] mr-[15px] ml-[17px] px-[16px] pt-[8px] pb-[143px]", card)}>
          <div className="flex items-center text-[13px] font-medium text-[#2b2f38]">
            <label htmlFor="sort" className="w-[57px]">
              排序方式
            </label>
            <Dropdown id="sort" className="w-[94px]" value="第一完成单位" tight />
          </div>
          <div className="mt-[10px] border border-[#ccd2d8] pr-[10px] pb-[12px] pl-[6px]">
            <DataTable
              cols={["w-[80px]", "w-[306px]", "w-[124px]", "w-[120px]", "w-[161px]", ""]}
              head={[
                "选择",
                <>
                  成果名称
                  <a href="#" className="text-[11px] font-normal text-[#0f56ab]">
                    （下载全部申请书）
                  </a>
                </>,
                "成果分类",
                "第一完成人",
                "第一完成单位",
                "评审意见",
              ]}
              rows={[row(0), row(1), row(2)]}
              headHeight="h-[34px]"
              rowHeights={["h-[33px]", "h-[33px]", "h-[37px]"]}
              highlight={1}
            />
            <OutlineButton className="mt-[12px] w-[139px]">
              <PencilGlyph className="size-[10px]" />
              录入或编辑评审意见
            </OutlineButton>
          </div>
          <div className="mt-[20px] flex items-center justify-between border-b border-dashed border-[#cfcfcf] pb-[22px] text-[13px] font-medium text-[#2b2f38]">
            如果您同意评审上述申请，请您先点击：
            <SolidButton tone="blue">同意评审</SolidButton>
          </div>
          <div className="flex justify-between">
            <div className="pt-[13px] leading-[25px] text-[#2b2f38]">
              <p className="text-[14px] font-medium">然后，您可以分别下载各申请书或打包下载所有申请书，评审完成，在上面表格完整填写结果后，按右边</p>
              <p className="pl-[7px] text-[13px] font-medium">“提交评审结果”提交评审结果，您也可以按”暂存“在系统里保存您的评审结果，全部评完后再提交。</p>
              <p className="mt-[8px] text-[11px] text-[#d0021b]">注意：</p>
              <p className="text-[11px]">1 评审等级为必填项，且等级A比例不能超过20%，A和B比例不能超过40%，A、B和C比例不能超过60%</p>
              <p className="text-[11px]">2. 评审意见为选填项，专家可根据需要填写，建议不超过50字</p>
            </div>
            <div className="flex flex-col gap-[14px] pt-[19px]">
              <SolidButton tone="green">提交评审结果</SolidButton>
              <SolidButton tone="slate">暂存</SolidButton>
            </div>
          </div>
        </section>
      </main>
      <SiteFooter className="pt-[9px] pb-[11px]" />
    </Board>
  );
}

function ReviewDetailBoard() {
  const id = useSafeId();
  const rows: Cell[][] = [1, 2, 3, 4, 5, 6].map((n) => [
    String(n),
    "方向性",
    <Dropdown className="w-[50px]" value="A+" label={"分项评价 " + n} />,
    "符合科学发展观，适应学位与研究生教育发展需求，有利于促进研究生教育改革",
  ]);
  const big = "block text-[13px] leading-[18px] font-medium text-[#2b2f38]";
  const area = "mt-[8px] block h-[93px] w-full resize-none rounded-[2px] border border-[#b9c7da] bg-white";
  return (
    <Board className="col-start-4">
      <main className="mr-[15px] ml-[17px] pt-[9px] pb-[28px]">
        <section className={clsx("pt-[14px] pb-[30px]", card)}>
          <SectionTitle className="pl-[11px] text-[15px] leading-[18px]">成果详细情况：</SectionTitle>
          <div className="mt-[7px] pl-[14px]">
            <AwardForm labelWidth="w-[102px]" />
          </div>
          <div className="mt-[6px] ml-[15px] flex gap-[13px]">
            <OutlineButton className="w-[98px]">
              <svg className="size-[11px]" viewBox="0 0 12 12" fill="none" stroke="currentColor" aria-hidden="true">
                <path d="M7 1H1v10h9V6M4 8l1-3 5.500-4.500L11.500 2 6 7z" />
              </svg>
              申请书下载
            </OutlineButton>
            <OutlineButton className="w-[89px]">
              <svg className="size-[11px]" viewBox="0 0 12 12" fill="none" stroke="currentColor" aria-hidden="true">
                <path d="M3.500 8L8 3.500c1-1 2.200.2 1.200 1.200L4.500 9.500c-2 1.600-3.600-.4-2.200-2L7.500 2c2.600-2 4.800.8 3 2.800L6 9.500" />
              </svg>
              附件下载
            </OutlineButton>
          </div>
          <div className="mt-[16px] mr-[17px] mb-[12px] ml-[14px] border-t border-dashed border-[#cfcfcf]" />
          <SectionTitle className="pl-[11px] text-[15px] leading-[18px]">评审意见：</SectionTitle>
          <p className="mt-[5px] ml-[15px] text-[11px] leading-[18px] text-[#555]">分项评价（以教学研究类为例）</p>
          <div className="mt-[8px] mr-[17px] ml-[15px] border border-[#ccd2d8] pr-[10px] pl-[7px]">
            <DataTable
              cols={["w-[98px]", "w-[104px]", "w-[104px]", ""]}
              head={["序号", "评价指标", "分项评价", "评价指标说明"]}
              rows={rows}
              headHeight="h-[33px]"
              rowHeights={["h-[34px]", "h-[34px]", "h-[35px]", "h-[34px]", "h-[34px]", "h-[34px]"]}
              highlight={1}
              openEnd
            />
          </div>
          <div className="mt-[16px] ml-[15px] flex items-center text-[12px] font-medium text-[#2f3543]">
            <label htmlFor={id + "t"} className="w-[72px]">
              总体评价：
            </label>
            <Dropdown id={id + "t"} className="w-[50px]" value="A+" />
          </div>
          <div className="mr-[26px] ml-[14px]">
            <label htmlFor={id + "c"} className={clsx("mt-[18px]", big)}>
              综合意见:
            </label>
            <textarea id={id + "c"} className={area} />
            <label htmlFor={id + "s"} className={clsx("mt-[15px]", big)}>
              特殊说明:
            </label>
            <textarea id={id + "s"} className={area} />
            <div className="mt-[22px] flex gap-[11px]">
              <SolidButton tone="blue">保存</SolidButton>
              <SolidButton tone="red">取消</SolidButton>
            </div>
          </div>
        </section>
      </main>
      <SiteFooter className="pt-[12px] pb-[44px]" />
    </Board>
  );
}

/* ---------- canvas ---------- */

function Strip({ className, children }: { className?: string; children: React.ReactNode }) {
  return <div className={clsx("grid grid-cols-[199fr_1117fr_136fr_1117fr_199fr_1117fr_211fr]", className)}>{children}</div>;
}

function Rule({ className }: { className: string }) {
  return <div aria-hidden="true" className={clsx("row-start-1 mt-[77px] h-px bg-[#4f8797]", className)} />;
}

export default function App() {
  return (
    <div className="relative bg-white font-['Noto_Sans','Noto_Sans_CJK_SC',sans-serif]">
      <Strip>
        <MyApplications />
        <Rule className="col-span-2 col-start-3 w-[372px]" />
      </Strip>
      <Strip className="mt-[70px]">
        <ApplicationBoard className="col-start-2" active={0} expanded tabPad="px-[7px]" actionPad="mt-[17px] mb-[36px]" footerPad="pt-[7px]">
          <div className="pt-[7px] pb-[10px] pl-[12px]">
            <AwardForm labelWidth="w-[116px]" notes />
          </div>
        </ApplicationBoard>
        <Rule className="col-start-3" />
        <PeopleBoard />
        <Rule className="col-start-5" />
        <UploadBoard />
        <Rule className="col-start-7" />
      </Strip>
      <Strip className="mt-[92px]">
        <PersonDialogBoard />
        <Rule className="col-span-2 col-start-5 w-[372px]" />
      </Strip>
      <Strip className="mt-[166px]">
        <ReviewListBoard />
        <Rule className="col-start-3" />
        <ReviewDetailBoard />
        <Rule className="col-span-2 col-start-5 w-[372px]" />
      </Strip>
      <RedMarks />
    </div>
  );
}
